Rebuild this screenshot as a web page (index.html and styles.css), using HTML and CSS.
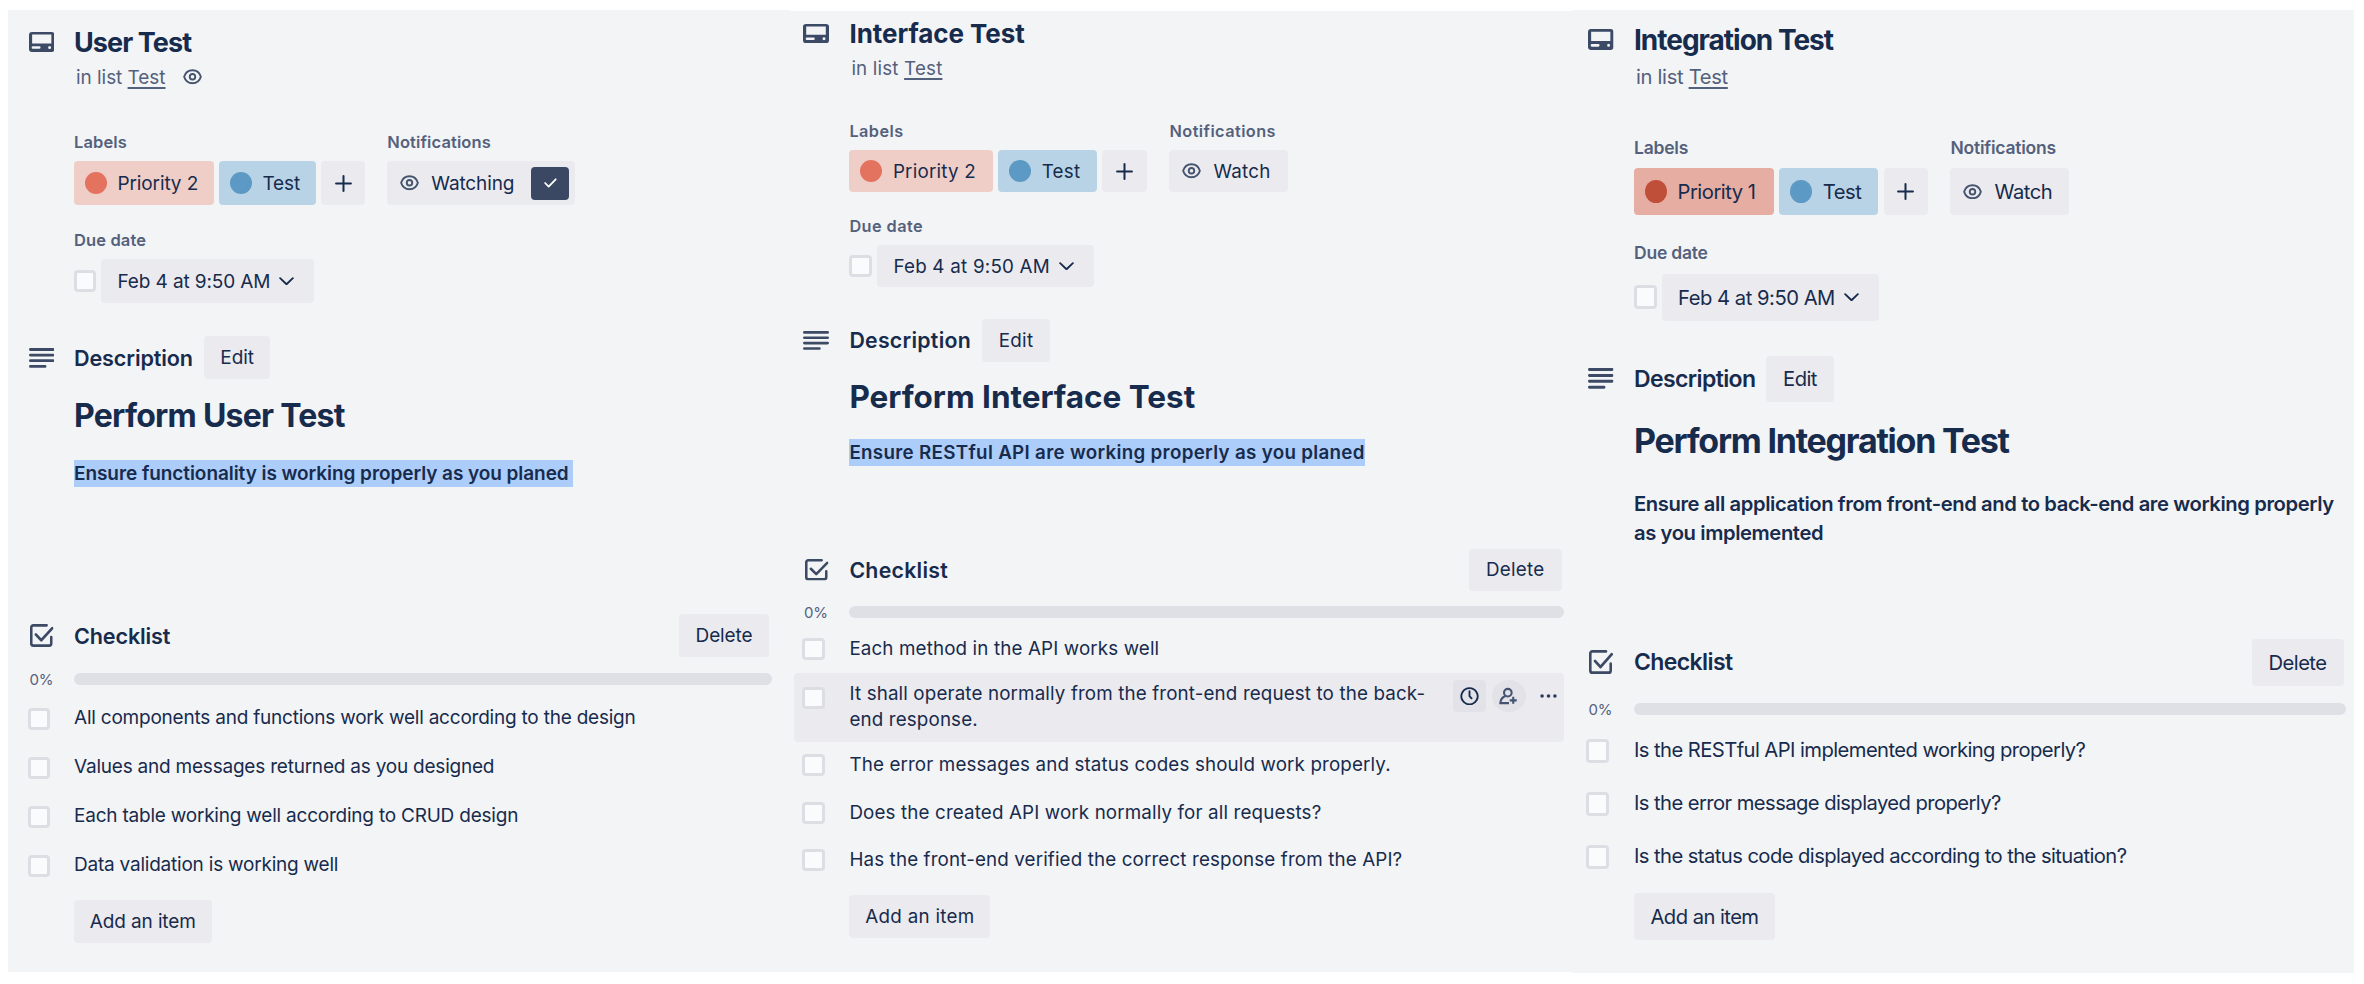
FILE: index.html
```html
<!DOCTYPE html>
<html lang="en">
<head>
<meta charset="utf-8">
<title>Test cards</title>
<link rel="stylesheet" href="styles.css">
</head>
<body>
<svg class="sprite" aria-hidden="true">
  <symbol id="i-card" viewBox="0 0 26 20" preserveAspectRatio="none"><path fill="currentColor" fill-rule="evenodd" d="M3 0h20a3 3 0 0 1 3 3v14a3 3 0 0 1-3 3H3a3 3 0 0 1-3-3V3a3 3 0 0 1 3-3zM3.200 2.600v8.800h19.600V2.600zM4 14.200a1 1 0 0 0 0 2.600h6.500a1 1 0 0 0 0-2.600zM21 14a1.500 1.500 0 1 0 0 3a1.500 1.500 0 1 0 0-3z"/></symbol>
  <symbol id="i-eye" viewBox="0 0 20 16" preserveAspectRatio="none"><g fill="none" stroke="currentColor" stroke-width="2"><path d="M1.200 8C2.500 3.800 5.500 1.300 10 1.300S17.500 3.800 18.800 8C17.500 12.200 14.500 14.700 10 14.700S2.500 12.200 1.200 8z"/><circle cx="10" cy="8" r="2.900"/></g></symbol>
  <symbol id="i-lines" viewBox="0 0 26 20" preserveAspectRatio="none"><path fill="none" stroke="currentColor" stroke-width="2.800" stroke-linecap="round" d="M1.400 1.500h23.200M1.400 7.100h23.200M1.400 12.700h23.200M1.400 18.400h15"/></symbol>
  <symbol id="i-check" viewBox="0 0 24 22" preserveAspectRatio="none"><path fill="none" stroke="currentColor" stroke-width="2.600" stroke-linecap="round" stroke-linejoin="round" d="M17 1.300H3.300a2 2 0 0 0-2 2v15.400a2 2 0 0 0 2 2h16.400a2 2 0 0 0 2-2V12.500M6 10l5.500 5.500L22.700 4"/></symbol>
  <symbol id="i-plus" viewBox="0 0 16 16" preserveAspectRatio="none"><path fill="none" stroke="currentColor" stroke-width="1.900" stroke-linecap="round" d="M8 1v14M1 8h14"/></symbol>
  <symbol id="i-tick" viewBox="0 0 14 10"><path fill="none" stroke="currentColor" stroke-width="1.900" stroke-linecap="round" stroke-linejoin="round" d="M1.200 5l3.800 3.800L12.600 1"/></symbol>
  <symbol id="i-down" viewBox="0 0 16 9" preserveAspectRatio="none"><path fill="none" stroke="currentColor" stroke-width="2" stroke-linecap="round" stroke-linejoin="round" d="M1.200 1.200L8 7.700l6.800-6.500"/></symbol>
  <symbol id="i-clock" viewBox="0 0 20 20"><path fill="none" stroke="currentColor" stroke-width="2" stroke-linecap="round" d="M10 1.200a8.800 8.800 0 1 0 .01 0zM10 4.500V10l2.200 2.300"/></symbol>
  <symbol id="i-member" viewBox="0 0 20 18"><g fill="none" stroke="currentColor" stroke-width="2.200"><circle cx="9.300" cy="5.200" r="4"/><path d="M6.800 8.700C3.500 10 1.600 12.500 1.400 16.200H10.500M15 9.600v7.400M11.300 13.300h7.400"/></g></symbol>
  <symbol id="i-dots" viewBox="0 0 18 4"><g fill="currentColor"><circle cx="2.200" cy="2" r="1.900"/><circle cx="9" cy="2" r="1.900"/><circle cx="15.800" cy="2" r="1.900"/></g></symbol>
</svg>
<main class="board">

  <section class="card card-user">
    <header class="row title-row"><div class="gutter"><svg class="icon"><use href="#i-card"/></svg></div><h2 class="title">User Test</h2></header>
    <div class="row sub-row"><p class="sub">in list <a class="list-link">Test</a></p><svg class="eye eye-sub"><use href="#i-eye"/></svg></div>
    <div class="row meta">
      <div class="group labels"><h3 class="head">Labels</h3>
        <div class="chips"><span class="chip chip-priority p2"><i class="dot"></i>Priority 2</span><span class="chip chip-test"><i class="dot"></i>Test</span><button class="add"><svg class="plus"><use href="#i-plus"/></svg></button></div></div>
      <div class="group"><h3 class="head">Notifications</h3>
        <button class="watch"><svg class="eye"><use href="#i-eye"/></svg><span>Watching</span><span class="watch-on"><svg class="tick"><use href="#i-tick"/></svg></span></button></div>
    </div>
    <div class="due"><h3 class="head">Due date</h3><div class="due-row"><i class="box"></i><button class="date">Feb 4 at 9:50 AM<svg class="down"><use href="#i-down"/></svg></button></div></div>
    <div class="row desc-row"><div class="gutter"><svg class="icon"><use href="#i-lines"/></svg></div><h3 class="section-title">Description</h3><button class="btn edit">Edit</button></div>
    <h1 class="heading">Perform User Test</h1>
    <p class="para"><mark class="mark">Ensure functionality is working properly as you planed&nbsp;</mark></p>
    <div class="row check-row"><div class="gutter"><svg class="icon icon-check"><use href="#i-check"/></svg></div><h3 class="section-title">Checklist</h3><button class="btn delete">Delete</button></div>
    <div class="row progress"><span class="gutter percent">0%</span><div class="bar"></div></div>
    <ul class="items">
      <li class="item"><i class="box"></i><span>All components and functions work well according to the design</span></li>
      <li class="item"><i class="box"></i><span>Values and messages returned as you designed</span></li>
      <li class="item"><i class="box"></i><span>Each table working well according to CRUD design</span></li>
      <li class="item"><i class="box"></i><span>Data validation is working well</span></li>
    </ul>
    <button class="btn add-item">Add an item</button>
  </section>

  <section class="card card-interface">
    <header class="row title-row"><div class="gutter"><svg class="icon"><use href="#i-card"/></svg></div><h2 class="title">Interface Test</h2></header>
    <div class="row sub-row"><p class="sub">in list <a class="list-link">Test</a></p></div>
    <div class="row meta">
      <div class="group labels"><h3 class="head">Labels</h3>
        <div class="chips"><span class="chip chip-priority p2"><i class="dot"></i>Priority 2</span><span class="chip chip-test"><i class="dot"></i>Test</span><button class="add"><svg class="plus"><use href="#i-plus"/></svg></button></div></div>
      <div class="group"><h3 class="head">Notifications</h3>
        <button class="watch"><svg class="eye"><use href="#i-eye"/></svg><span>Watch</span></button></div>
    </div>
    <div class="due"><h3 class="head">Due date</h3><div class="due-row"><i class="box"></i><button class="date">Feb 4 at 9:50 AM<svg class="down"><use href="#i-down"/></svg></button></div></div>
    <div class="row desc-row"><div class="gutter"><svg class="icon"><use href="#i-lines"/></svg></div><h3 class="section-title">Description</h3><button class="btn edit">Edit</button></div>
    <h1 class="heading">Perform Interface Test</h1>
    <p class="para"><mark class="mark">Ensure RESTful API are working properly as you planed</mark></p>
    <div class="row check-row"><div class="gutter"><svg class="icon icon-check"><use href="#i-check"/></svg></div><h3 class="section-title">Checklist</h3><button class="btn delete">Delete</button></div>
    <div class="row progress"><span class="gutter percent">0%</span><div class="bar"></div></div>
    <ul class="items">
      <li class="item"><i class="box"></i><span>Each method in the API works well</span></li>
      <li class="item item-hover"><i class="box"></i><span class="item-text">It shall operate normally from the front-end request to the back-<br>end response.</span>
        <div class="tools"><span class="tool tool-clock"><svg class="tool-icon"><use href="#i-clock"/></svg></span><span class="tool tool-member"><svg class="tool-icon"><use href="#i-member"/></svg></span><span class="tool"><svg class="dots"><use href="#i-dots"/></svg></span></div></li>
      <li class="item"><i class="box"></i><span>The error messages and status codes should work properly.</span></li>
      <li class="item"><i class="box"></i><span>Does the created API work normally for all requests?</span></li>
      <li class="item"><i class="box"></i><span>Has the front-end verified the correct response from the API?</span></li>
    </ul>
    <button class="btn add-item">Add an item</button>
  </section>

  <section class="card card-integration">
    <header class="row title-row"><div class="gutter"><svg class="icon"><use href="#i-card"/></svg></div><h2 class="title">Integration Test</h2></header>
    <div class="row sub-row"><p class="sub">in list <a class="list-link">Test</a></p></div>
    <div class="row meta">
      <div class="group labels"><h3 class="head">Labels</h3>
        <div class="chips"><span class="chip chip-priority p1"><i class="dot"></i>Priority 1</span><span class="chip chip-test"><i class="dot"></i>Test</span><button class="add"><svg class="plus"><use href="#i-plus"/></svg></button></div></div>
      <div class="group"><h3 class="head">Notifications</h3>
        <button class="watch"><svg class="eye"><use href="#i-eye"/></svg><span>Watch</span></button></div>
    </div>
    <div class="due"><h3 class="head">Due date</h3><div class="due-row"><i class="box"></i><button class="date">Feb 4 at 9:50 AM<svg class="down"><use href="#i-down"/></svg></button></div></div>
    <div class="row desc-row"><div class="gutter"><svg class="icon"><use href="#i-lines"/></svg></div><h3 class="section-title">Description</h3><button class="btn edit">Edit</button></div>
    <h1 class="heading">Perform Integration Test</h1>
    <p class="para">Ensure all application from front-end and to back-end are working properly<br>as you implemented</p>
    <div class="row check-row"><div class="gutter"><svg class="icon icon-check"><use href="#i-check"/></svg></div><h3 class="section-title">Checklist</h3><button class="btn delete">Delete</button></div>
    <div class="row progress"><span class="gutter percent">0%</span><div class="bar"></div></div>
    <ul class="items">
      <li class="item"><i class="box"></i><span>Is the RESTful API implemented working properly?</span></li>
      <li class="item"><i class="box"></i><span>Is the error message displayed properly?</span></li>
      <li class="item"><i class="box"></i><span>Is the status code displayed according to the situation?</span></li>
    </ul>
    <button class="btn add-item">Add an item</button>
  </section>
</main>
</body>
</html>
```
FILE: styles.css
```css
* { box-sizing: border-box; margin: 0; padding: 0; }
body { background: #fff; font-family: Inter, "Liberation Sans", sans-serif; color: #172b4d; width: 2364px; height: 984px; overflow: hidden; }
button { font: inherit; color: inherit; letter-spacing: inherit; border: 0; background: #ebeaee; border-radius: 4px; }
.sprite { position: absolute; width: 0; height: 0; }
svg { display: block; flex: none; }
.board { display: flex; align-items: flex-start; padding: 10px 0 0 8px; }

.card { background: #f3f4f6; flex: none; font-size: var(--fs); letter-spacing: var(--ls); white-space: nowrap; }

.card-user {
  width: 782px; height: 962px; padding-top: 12px;
  --fs: 19px; --ls: -.0065em;
  --body: 66px; --icon-x: 20.500px; --box-x: 20px; --pct-x: 21.500px; --check-x: 22px;
  --icon-w: 25.500px; --icon-h: 20px; --check-w: 23.500px; --check-h: 23px;
  --box-w: 22px; --box-h: 22px; --dot-h: 22px;
  --fs-title: 27px; --ls-title: -.034em; --fs-head: 16.500px; --ls-head: .007em; --ls-sub: -.0025em;
  --fs-section: 21.600px; --ls-section: -.0065em; --fs-h1: 32px; --ls-h1: -.0235em; --ls-para: -.0035em; --ls-item: -.0115em; --ls-btn: -.006em;
  --sub-h: 30px; --meta-top: 38px; --head-h: 24px; --head-gap: 7px; --ctl: 44px; --due-top: 23px;
  --c1: 139.500px; --c2: 97px; --c3: 44px; --gap: 5.400px; --group-gap: 22px; --watch-w: 188px;
  --date-x: 5px; --date-w: 213px;
  --desc-top: 33px; --btn-h: 43px; --edit-x: 11px; --edit-w: 66.500px;
  --h1-top: 16.500px; --para-top: 24.500px; --para-h: 27px; --check-top: 127px; --delete-w: 90px; --delete-r: 21px;
  --progress-top: 14px; --bar-w: 697.500px; --items-top: 7px; --item-h: 49px; --item-shift: -1.500px; --add-top: 10px; --add-w: 137.500px;
}
.card-interface {
  width: 782px; height: 961px; margin-top: 1px; padding-top: 2.500px;
  --fs: 18.800px; --ls: .012em;
  --body: 59.400px; --icon-x: 13px; --box-x: 12px; --pct-x: 14px; --check-x: 15px;
  --icon-w: 26px; --icon-h: 19px; --check-w: 23.500px; --check-h: 21.500px;
  --box-w: 22.500px; --box-h: 22px; --dot-h: 22px;
  --fs-title: 26px; --ls-title: -.002em; --fs-head: 16.300px; --ls-head: .027em; --ls-sub: .009em;
  --fs-section: 21.300px; --ls-section: .0125em; --fs-h1: 31.500px; --ls-h1: -.0005em; --ls-para: .016em; --ls-item: .007em; --ls-btn: .015em;
  --sub-h: 30px; --meta-top: 35.500px; --head-h: 24px; --head-gap: 7px; --ctl: 42px; --due-top: 22px;
  --c1: 143.500px; --c2: 99px; --c3: 44.500px; --gap: 5.300px; --group-gap: 22.500px; --watch-w: 119px;
  --date-x: 5px; --date-w: 217.500px;
  --desc-top: 32px; --btn-h: 42.500px; --edit-x: 11px; --edit-w: 68px;
  --h1-top: 15px; --para-top: 22px; --para-h: 27px; --check-top: 83px; --delete-w: 92.500px; --delete-r: 10.500px;
  --progress-top: 13px; --bar-w: 714.500px; --items-top: 5.500px; --item-h: 47.500px; --item-shift: -1px; --add-top: 11px; --add-w: 141px;
}
.card-integration {
  width: 782px; height: 963px; padding-top: 9.500px;
  --fs: 20.200px; --ls: -.0235em;
  --body: 62px; --icon-x: 16px; --box-x: 14px; --pct-x: 16.500px; --check-x: 17px;
  --icon-w: 25.500px; --icon-h: 21px; --check-w: 24px; --check-h: 24px;
  --box-w: 22.500px; --box-h: 24px; --dot-h: 23.500px;
  --fs-title: 28px; --ls-title: -.036em; --fs-head: 17.500px; --ls-head: -.013em; --ls-sub: -.016em;
  --fs-section: 23px; --ls-section: -.0265em; --fs-h1: 34px; --ls-h1: -.0365em; --ls-para: -.0195em; --ls-item: -.028em; --ls-btn: -.027em;
  --sub-h: 34.500px; --meta-top: 41.500px; --head-h: 24px; --head-gap: 8.500px; --ctl: 47px; --due-top: 26px;
  --c1: 140px; --c2: 99px; --c3: 44.500px; --gap: 5.300px; --group-gap: 22.400px; --watch-w: 118.500px;
  --date-x: 5px; --date-w: 217px;
  --desc-top: 35px; --btn-h: 46.500px; --edit-x: 10.500px; --edit-w: 68px;
  --h1-top: 18.500px; --para-top: 28px; --para-h: 29px; --check-top: 92.500px; --delete-w: 92px; --delete-r: 10.500px;
  --progress-top: 15.500px; --bar-w: 712px; --items-top: 7px; --item-h: 53px; --item-shift: -2px; --add-top: 10px; --add-w: 141px;
}

.row { display: flex; align-items: center; }
.gutter { flex: none; width: var(--body); padding-left: var(--icon-x); color: #3d4a66; }
.icon { width: var(--icon-w); height: var(--icon-h); }
.check-row .gutter { padding-left: var(--check-x); }
.icon-check { width: var(--check-w); height: var(--check-h); }

.title-row { height: 40px; }
.title { font-size: var(--fs-title); font-weight: 700; letter-spacing: var(--ls-title); }
.sub-row { height: var(--sub-h); padding-left: calc(var(--body) + 2px); color: #54617c; }
.sub { letter-spacing: var(--ls-sub); }
.list-link { text-decoration: underline; text-decoration-thickness: 1.500px; text-underline-offset: 3px; }
.eye { width: 19px; height: 15.500px; color: #44546f; }
.eye-sub { margin-left: 17.500px; }

.meta { margin-top: var(--meta-top); padding-left: var(--body); gap: var(--group-gap); }
.head { height: var(--head-h); line-height: 24px; margin-bottom: var(--head-gap); font-size: var(--fs-head); font-weight: 600; letter-spacing: var(--ls-head); color: #54617c; }
.chips { display: flex; gap: var(--gap); }
.chip { display: flex; align-items: center; height: var(--ctl); padding-left: 11px; border-radius: 4px; }
.chip-priority { width: var(--c1); }
.chip-test { width: var(--c2); background: #b9d3e6; }
.p2 { background: #efcec8; }
.p1 { background: #e6aea3; }
.dot { width: 22px; height: var(--dot-h); margin-right: 10.500px; border-radius: 50%; background: #5c99c5; }
.p2 .dot { background: #e3725f; }
.p1 .dot { background: #c04f3a; }
.add { display: flex; align-items: center; justify-content: center; width: var(--c3); height: var(--ctl); }
.plus { width: 17px; height: 17px; }
.watch { display: flex; align-items: center; width: var(--watch-w); height: var(--ctl); padding-left: 12.500px; }
.watch .eye { margin-right: 12.500px; }
.watch-on { display: flex; align-items: center; justify-content: center; width: 38px; height: 33px; margin: 0 6px 0 auto; border-radius: 4px; background: #3b4863; color: #fff; }
.tick { width: 13px; height: 10px; }

.due { margin-top: var(--due-top); padding-left: var(--body); }
.due-row { display: flex; align-items: center; }
.box { flex: none; width: var(--box-w); height: var(--box-h); border: 3px solid #dddee4; border-radius: 4px; background: #fafbfc; }
.date { display: flex; align-items: center; width: var(--date-w); height: var(--ctl); margin-left: var(--date-x); padding-left: 16.500px; }
.down { width: 15px; height: 8.500px; margin: 0 20px 0 auto; }

.desc-row { height: var(--btn-h); margin-top: var(--desc-top); }
.section-title { font-size: var(--fs-section); font-weight: 600; letter-spacing: var(--ls-section); }
.btn { height: var(--btn-h); letter-spacing: var(--ls-btn); text-align: center; }
.edit { width: var(--edit-w); margin-left: var(--edit-x); }
.heading { height: 40px; line-height: 40px; margin: var(--h1-top) 0 0 var(--body); font-size: var(--fs-h1); font-weight: 700; letter-spacing: var(--ls-h1); }
.para { margin: var(--para-top) 0 0 var(--body); line-height: var(--para-h); font-weight: 600; letter-spacing: var(--ls-para); }
.mark { display: inline-block; background: #accdf9; color: inherit; }

.check-row { height: var(--btn-h); margin-top: var(--check-top); }
.delete { width: var(--delete-w); margin: 0 var(--delete-r) 0 auto; }
.progress { height: 16px; margin-top: var(--progress-top); }
.percent { padding-left: var(--pct-x); font-size: 15px; letter-spacing: -.01em; color: #54617c; }
.bar { width: var(--bar-w); height: 11.500px; border-radius: 6px; background: #dfe0e6; }
.items { list-style: none; margin-top: var(--items-top); letter-spacing: var(--ls-item); }
.item { display: grid; grid-template-columns: calc(var(--body) - var(--box-x)) auto; align-items: center; height: var(--item-h); padding-left: var(--box-x); }
.item > span { margin-top: var(--item-shift); }
.item-hover { display: flex; align-items: flex-start; width: 770.500px; height: 68.500px; margin-left: 3.500px; padding-left: 8.500px; border-radius: 4px; background: #ebeaee; }
.item-hover .box { margin-top: 13.500px; }
.item-hover .item-text { margin: 8px 0 0 25px; line-height: 26px; }
.tools { display: flex; gap: 6px; margin: 7px -1px 0 auto; }
.tool { display: flex; align-items: center; justify-content: center; width: 33.500px; height: 32px; }
.tool-clock { border-radius: 4px; background: #e2e2e8; }
.tool-member { border-radius: 50%; background: #e2e2e8; color: #44546f; }
.tool-icon { width: 19px; height: 18.500px; }
.dots { width: 17px; height: 4px; color: #2c3e5d; }
.add-item { display: block; width: var(--add-w); margin: var(--add-top) 0 0 var(--body); }
```
